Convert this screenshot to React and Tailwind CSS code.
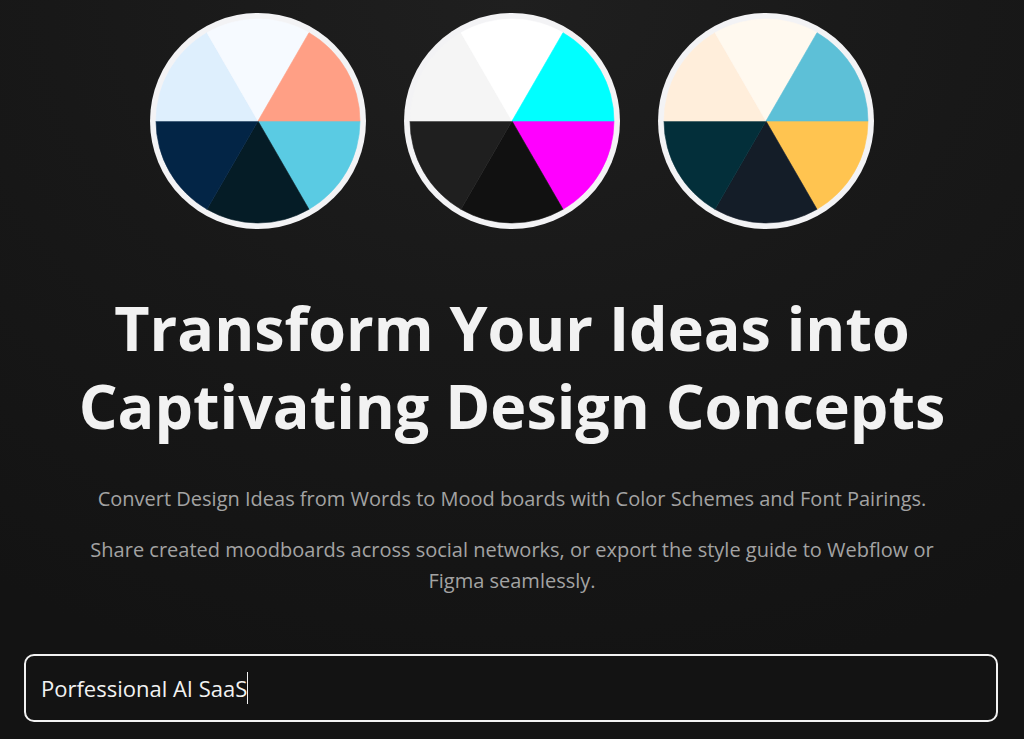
import React, { useState } from "react";

// Slices run clockwise from the right edge
const palettes = [
  { name: "Coral Sea", colors: ["#5acbe3", "#051c26", "#032546", "#deeffd", "#f6faff", "#ff9f85"] },
  { name: "Neon Mono", colors: ["#ff00ff", "#111111", "#1f1f1f", "#f5f5f5", "#ffffff", "#00ffff"] },
  { name: "Warm Harbor", colors: ["#ffc450", "#141d28", "#032f3a", "#ffeedb", "#fff9ef", "#5dc0d7"] },
];

const slices = [
  "M0 0 L102 0 A102 102 0 0 1 51 88.33 Z",
  "M0 0 L51 88.33 A102 102 0 0 1 -51 88.33 Z",
  "M0 0 L-51 88.33 A102 102 0 0 1 -102 0 Z",
  "M0 0 L-102 0 A102 102 0 0 1 -51 -88.33 Z",
  "M0 0 L-51 -88.33 A102 102 0 0 1 51 -88.33 Z",
  "M0 0 L51 -88.33 A102 102 0 0 1 102 0 Z",
];

function PaletteWheel({ name, colors }) {
  return (
    <svg viewBox="-108 -108 216 216" className="w-[216px] min-w-0" role="img" aria-label={name}>
      <circle r="108" fill="#f3f3f5" />
      {/* The thin stroke closes the seams between slices */}
      {slices.map((d, i) => (
        <path key={d} d={d} fill={colors[i]} stroke={colors[i]} strokeWidth="0.6" />
      ))}
    </svg>
  );
}

export default function App() {
  const [idea, setIdea] = useState("Porfessional AI SaaS");

  return (
    <main className="min-h-screen bg-[#121212] bg-[radial-gradient(ellipse_90%_95%_at_top,#1f1f1f_0%,#181818_50%,#131313_100%)] px-6 pt-[13px] pb-4 font-['Open_Sans','Noto_Sans',sans-serif]">
      <div className="flex justify-center gap-[38px]">
        {palettes.map((palette) => (
          <PaletteWheel key={palette.name} name={palette.name} colors={palette.colors} />
        ))}
      </div>

      <section className="mx-auto mt-[60px] max-w-[880px] text-center">
        <h1 className="text-[61px] leading-[78px] font-bold text-[#f2f2f2]">
          Transform Your Ideas into
          <br />
          Captivating Design Concepts
        </h1>
        <div className="mt-[38px] space-y-5 text-[20px] leading-[31px] text-[#a3a3a3]">
          <p>Convert Design Ideas from Words to Mood boards with Color Schemes and Font Pairings.</p>
          <p>
            Share created moodboards across social networks, or export the style guide to Webflow or
            Figma seamlessly.
          </p>
        </div>
      </section>

      <label
        htmlFor="idea"
        className="mt-[58px] mr-0.5 flex h-[68px] cursor-text items-center rounded-[10px] border-2 border-[#f2f2f2] bg-[#131313] px-[15px]"
      >
        <input
          id="idea"
          type="text"
          aria-label="Describe your idea"
          value={idea}
          onChange={(e) => setIdea(e.target.value)}
          className="field-sizing-content max-w-full bg-transparent text-[22px] leading-[32px] text-[#f2f2f2] caret-transparent outline-none"
        />
        {/* Text cursor */}
        <span className="h-8 w-px bg-[#f2f2f2]" />
      </label>
    </main>
  );
}
